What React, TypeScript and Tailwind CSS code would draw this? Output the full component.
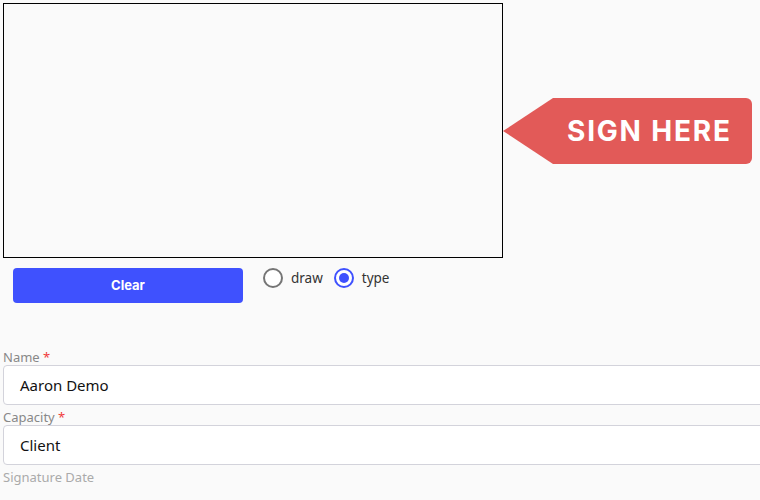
export default function App() {
  return (
    <div className="min-h-screen w-[760px] overflow-hidden bg-[#fafafa] pl-[3px] pt-[3px] font-['Noto_Sans',sans-serif]">
      <div className="flex items-center">
        <div className="h-[255px] w-[500px] shrink-0 border border-black bg-[#fafafa]" />
        <div className="flex shrink-0 items-center">
          <div className="h-0 w-0 border-y-[33px] border-r-[50px] border-y-transparent border-r-[#e25a58]" />
          <div className="flex h-[66px] w-[199px] items-center rounded-r-md bg-[#e25a58] pl-[14px] font-['Inter',sans-serif] text-[28px] font-bold tracking-[1.8px] text-white">
            SIGN HERE
          </div>
        </div>
      </div>

      <div className="mt-[10px] flex items-start pl-[10px]">
        <button className="flex h-[35px] w-[230px] items-center justify-center rounded bg-[#3f51fe] font-['Inter',sans-serif] text-[13px] font-bold text-white">
          Clear
        </button>
        <label className="ml-[20px] flex items-center text-[13.5px] text-[#333]">
          <span className="h-5 w-5 rounded-full border-2 border-[#757575] bg-white" />
          <span className="ml-2">draw</span>
        </label>
        <label className="ml-[11px] flex items-center text-[13.5px] text-[#333]">
          <span className="flex h-5 w-5 items-center justify-center rounded-full border-2 border-[#3f51fe] bg-white">
            <span className="h-[10px] w-[10px] rounded-full bg-[#3f51fe]" />
          </span>
          <span className="ml-2">type</span>
        </label>
      </div>

      <div className="mt-[42px] flex flex-col">
        <div className="flex h-5 items-end text-[13px] leading-4 text-[#888]">
          Name&nbsp;<span className="text-[#f03a3a]">*</span>
        </div>
        <div className="flex h-10 w-[780px] items-center rounded border border-[#d3d3db] bg-white pl-4 text-[15px] text-[#111]">
          Aaron Demo
        </div>
        <div className="flex h-5 items-end text-[13px] leading-4 text-[#888]">
          Capacity&nbsp;<span className="text-[#f03a3a]">*</span>
        </div>
        <div className="flex h-10 w-[780px] items-center rounded border border-[#d3d3db] bg-white pl-4 text-[15px] text-[#111]">
          Client
        </div>
        <div className="flex h-5 items-end text-[13px] leading-4 text-[#aaa]">Signature Date</div>
      </div>
    </div>
  );
}
